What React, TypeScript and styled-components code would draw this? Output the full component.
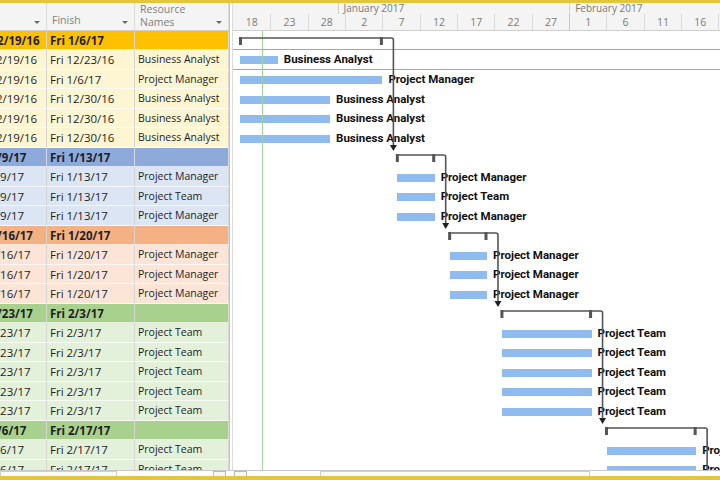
import React from "react";
import styled, { createGlobalStyle } from "styled-components";

const DAY = 7.47;
const ROW = 19.5;

const GlobalStyle = createGlobalStyle`
  html, body {
    margin: 0;
    padding: 0;
    background: #ffffff;
  }
  body {
    font-family: "Open Sans", "Noto Sans", sans-serif;
  }
`;

const groups = [
  { head: "#ffc000", body: "#fef6d3" },
  { head: "#8eaadb", body: "#dce5f4" },
  { head: "#f4b183", body: "#fce5d6" },
  { head: "#a9d18e", body: "#e3f0da" },
  { head: "#a9d18e", body: "#e3f0da" },
];

type Task = {
  start: string;
  finish: string;
  res: string;
  group: number;
  from: number;
  to: number;
  summary?: boolean;
};

const BA = "Business Analyst";
const PM = "Project Manager";
const PT = "Project Team";

// days counted from Sun 12/18/16
const tasks: Task[] = [
  { start: "Mon 12/19/16", finish: "Fri 1/6/17", res: "", group: 0, from: 1, to: 20, summary: true },
  { start: "Mon 12/19/16", finish: "Fri 12/23/16", res: BA, group: 0, from: 1, to: 6 },
  { start: "Mon 12/19/16", finish: "Fri 1/6/17", res: PM, group: 0, from: 1, to: 20 },
  { start: "Mon 12/19/16", finish: "Fri 12/30/16", res: BA, group: 0, from: 1, to: 13 },
  { start: "Mon 12/19/16", finish: "Fri 12/30/16", res: BA, group: 0, from: 1, to: 13 },
  { start: "Mon 12/19/16", finish: "Fri 12/30/16", res: BA, group: 0, from: 1, to: 13 },
  { start: "Mon 1/9/17", finish: "Fri 1/13/17", res: "", group: 1, from: 22, to: 27, summary: true },
  { start: "Mon 1/9/17", finish: "Fri 1/13/17", res: PM, group: 1, from: 22, to: 27 },
  { start: "Mon 1/9/17", finish: "Fri 1/13/17", res: PT, group: 1, from: 22, to: 27 },
  { start: "Mon 1/9/17", finish: "Fri 1/13/17", res: PM, group: 1, from: 22, to: 27 },
  { start: "Mon 1/16/17", finish: "Fri 1/20/17", res: "", group: 2, from: 29, to: 34, summary: true },
  { start: "Mon 1/16/17", finish: "Fri 1/20/17", res: PM, group: 2, from: 29, to: 34 },
  { start: "Mon 1/16/17", finish: "Fri 1/20/17", res: PM, group: 2, from: 29, to: 34 },
  { start: "Mon 1/16/17", finish: "Fri 1/20/17", res: PM, group: 2, from: 29, to: 34 },
  { start: "Mon 1/23/17", finish: "Fri 2/3/17", res: "", group: 3, from: 36, to: 48, summary: true },
  { start: "Mon 1/23/17", finish: "Fri 2/3/17", res: PT, group: 3, from: 36, to: 48 },
  { start: "Mon 1/23/17", finish: "Fri 2/3/17", res: PT, group: 3, from: 36, to: 48 },
  { start: "Mon 1/23/17", finish: "Fri 2/3/17", res: PT, group: 3, from: 36, to: 48 },
  { start: "Mon 1/23/17", finish: "Fri 2/3/17", res: PT, group: 3, from: 36, to: 48 },
  { start: "Mon 1/23/17", finish: "Fri 2/3/17", res: PT, group: 3, from: 36, to: 48 },
  { start: "Mon 2/6/17", finish: "Fri 2/17/17", res: "", group: 4, from: 50, to: 62, summary: true },
  { start: "Mon 2/6/17", finish: "Fri 2/17/17", res: PT, group: 4, from: 50, to: 62 },
  { start: "Mon 2/6/17", finish: "Fri 2/17/17", res: PT, group: 4, from: 50, to: 62 },
];

const months = [
  { label: "", days: 14 },
  { label: "January 2017", days: 31 },
  { label: "February 2017", days: 28 },
];

const dayLabels = ["18", "23", "28", "2", "7", "12", "17", "22", "27", "1", "6", "11", "16", "21"];

const Frame = styled.div`
  width: 720px;
  height: 480px;
  display: flex;
  flex-direction: column;
  overflow: hidden;
  border-top: 3px solid #e3c63c;
  border-bottom: 4px solid #e3c63c;
  box-sizing: border-box;
`;

const Main = styled.div`
  flex: 1;
  display: flex;
  overflow: hidden;
`;

/* ---------- table ---------- */

const TablePane = styled.div`
  width: 229px;
  flex-shrink: 0;
  display: flex;
  flex-direction: column;
  overflow: hidden;
`;

const HeadRow = styled.div`
  display: flex;
  height: 27.5px;
  flex-shrink: 0;
  background: #f4f4f4;
  border-bottom: 1px solid #cfcfcf;
  box-sizing: border-box;
`;

const HeadCell = styled.div<{ $w: number; $shift?: number }>`
  width: ${(p) => p.$w}px;
  flex-shrink: 0;
  margin-left: ${(p) => p.$shift ?? 0}px;
  display: flex;
  align-items: flex-end;
  justify-content: space-between;
  padding: 0 6px 1px 5px;
  box-sizing: border-box;
  border-right: 1px solid #dadada;
  color: #808080;
  font-size: 10.5px;
  line-height: 13px;
`;

const DropArrow = styled.span`
  width: 0;
  height: 0;
  margin-bottom: 5px;
  border-left: 3.5px solid transparent;
  border-right: 3.5px solid transparent;
  border-top: 3.5px solid #6a6a6a;
`;

const TableRow = styled.div<{ $bg: string; $bold?: boolean }>`
  display: flex;
  height: ${ROW}px;
  flex-shrink: 0;
  background: ${(p) => p.$bg};
  font-weight: ${(p) => (p.$bold ? 700 : 400)};
  color: #1e1e1e;
`;

const Cell = styled.div<{ $w: number; $shift?: number; $small?: boolean }>`
  width: ${(p) => p.$w}px;
  flex-shrink: 0;
  margin-left: ${(p) => p.$shift ?? 0}px;
  padding: ${(p) => (p.$small ? "1px 0 0 3px" : "2px 0 0 3px")};
  box-sizing: border-box;
  border-right: 1px solid #d6d6d6;
  border-bottom: 1px solid rgba(255, 255, 255, 0.7);
  font-size: ${(p) => (p.$small ? "10.5px" : "11.5px")};
  line-height: 16px;
  white-space: nowrap;
  overflow: hidden;
`;

const Splitter = styled.div`
  width: 4px;
  flex-shrink: 0;
  background: #ffffff;
  border-left: 1px solid #c4c4c4;
  border-right: 1px solid #dcdcdc;
  box-sizing: border-box;
`;

/* ---------- gantt ---------- */

const GanttPane = styled.div`
  flex: 1;
  display: flex;
  flex-direction: column;
  overflow: hidden;
`;

const Scale = styled.div`
  height: 27.5px;
  flex-shrink: 0;
  display: flex;
  flex-direction: column;
  background: #f4f4f4;
  border-bottom: 1px solid #cfcfcf;
  box-sizing: border-box;
  color: #7a7a7a;
`;

const Tier = styled.div<{ $h: number }>`
  display: flex;
  height: ${(p) => p.$h}px;
  flex-shrink: 0;
`;

const MonthCell = styled.div<{ $first?: boolean }>`
  flex-shrink: 0;
  padding-left: 5px;
  box-sizing: border-box;
  border-left: ${(p) => (p.$first ? "none" : "1px solid #d2d2d2")};
  font-size: 10px;
  line-height: 10px;
  white-space: nowrap;
`;

const DayCell = styled.div<{ $first?: boolean; $month?: boolean }>`
  flex-shrink: 0;
  display: flex;
  align-items: center;
  justify-content: center;
  border-left: ${(p) => (p.$first ? "none" : `1px solid ${p.$month ? "#c8c8c8" : "#dcdcdc"}`)};
  box-sizing: border-box;
  font-size: 10.5px;
`;

const Chart = styled.div`
  position: relative;
  flex: 1;
  display: flex;
  flex-direction: column;
  overflow: hidden;
`;

const ChartRow = styled.div<{ $line?: boolean }>`
  height: ${ROW}px;
  flex-shrink: 0;
  display: flex;
  align-items: center;
  box-sizing: border-box;
  border-bottom: ${(p) => (p.$line ? "1px solid #a6a6a6" : "none")};
`;

const Bar = styled.div`
  height: 8px;
  margin-top: 2px;
  flex-shrink: 0;
  background: #90bbef;
`;

const BarLabel = styled.span`
  margin-left: 6px;
  font-family: Roboto, "Liberation Sans", sans-serif;
  font-weight: 700;
  font-size: 11.5px;
  color: #111111;
  white-space: nowrap;
`;

const Links = styled.svg`
  position: absolute;
  left: 0;
  top: 0;
  pointer-events: none;
`;

/* ---------- bottom scrollbars ---------- */

const ScrollStrip = styled.div`
  height: 6px;
  flex-shrink: 0;
  display: flex;
  background: #ffffff;
  border-top: 1px solid #c8c8c8;
  box-sizing: border-box;
`;

const ScrollPart = styled.div<{ $w?: number }>`
  width: ${(p) => (p.$w ? `${p.$w}px` : "auto")};
  flex: ${(p) => (p.$w ? "0 0 auto" : "1")};
  display: flex;
  align-items: stretch;
`;

const Thumb = styled.div<{ $w: number; $left: number }>`
  width: ${(p) => p.$w}px;
  margin-left: ${(p) => p.$left}px;
  border: 1px solid #cfcfcf;
  border-bottom: none;
  background: #fafafa;
  box-sizing: border-box;
`;

const ArrowBtn = styled.div<{ $left: number }>`
  width: 13px;
  margin-left: ${(p) => p.$left}px;
  border: 1px solid #b8b8b8;
  border-bottom: none;
  background: #f7f7f7;
  box-sizing: border-box;
`;

const GanttLinks = () => {
  const sums = tasks.map((t, i) => ({ t, i })).filter((s) => s.t.summary);
  const height = 480;
  return (
    <Links width={487} height={height}>
      <line x1={29.5} y1={0} x2={29.5} y2={height} stroke="#9fd49a" strokeWidth={1} />
      {sums.map((s, k) => {
        const top = s.i * ROW;
        const x1 = s.t.from * DAY;
        const x2 = s.t.to * DAY;
        const cx = x2 + 11;
        const next = sums[k + 1];
        const endY = next ? next.i * ROW - 1 : height;
        return (
          <g key={s.i}>
            <path
              d={`M ${x1 - 1} ${top + 7} H ${cx - 2} Q ${cx} ${top + 7} ${cx} ${top + 9} V ${endY}`}
              fill="none"
              stroke="#555555"
              strokeWidth={1.6}
            />
            <rect x={x1 - 1.5} y={top + 6} width={3} height={8} fill="#555555" />
            <rect x={x2 - 2.5} y={top + 6} width={3} height={8} fill="#555555" />
            {next && (
              <polygon
                points={`${cx - 3.5},${endY - 2} ${cx + 3.5},${endY - 2} ${cx},${endY + 4}`}
                fill="#222222"
              />
            )}
          </g>
        );
      })}
    </Links>
  );
};

const App = () => {
  return (
    <>
      <GlobalStyle />
      <Frame>
        <Main>
          <TablePane>
            <HeadRow>
              <HeadCell $w={88} $shift={-41}>
                <span>Start</span>
                <DropArrow />
              </HeadCell>
              <HeadCell $w={88}>
                <span style={{ marginBottom: 2 }}>Finish</span>
                <DropArrow />
              </HeadCell>
              <HeadCell $w={94}>
                <span>
                  Resource
                  <br />
                  Names
                </span>
                <DropArrow />
              </HeadCell>
            </HeadRow>
            {tasks.map((t, i) => {
              const g = groups[t.group];
              return (
                <TableRow key={i} $bg={t.summary ? g.head : g.body} $bold={t.summary}>
                  <Cell $w={88} $shift={-41}>{t.start}</Cell>
                  <Cell $w={88}>{t.finish}</Cell>
                  <Cell $w={94} $small>{t.res}</Cell>
                </TableRow>
              );
            })}
          </TablePane>
          <Splitter />
          <GanttPane>
            <Scale>
              <Tier $h={10.5}>
                {months.map((m, i) => (
                  <MonthCell key={i} $first={i === 0} style={{ width: m.days * DAY }}>
                    {m.label}
                  </MonthCell>
                ))}
              </Tier>
              <Tier $h={16}>
                {dayLabels.map((d, i) => (
                  <DayCell key={i} $first={i === 0} $month={d === "1"} style={{ width: 5 * DAY }}>
                    {d}
                  </DayCell>
                ))}
              </Tier>
            </Scale>
            <Chart>
              {tasks.map((t, i) => (
                <ChartRow key={i} $line={i < 2}>
                  {!t.summary && (
                    <>
                      <Bar style={{ marginLeft: t.from * DAY, width: (t.to - t.from) * DAY }} />
                      <BarLabel>{t.res}</BarLabel>
                    </>
                  )}
                </ChartRow>
              ))}
              <GanttLinks />
            </Chart>
          </GanttPane>
        </Main>
        <ScrollStrip>
          <ScrollPart $w={233}>
            <Thumb $w={117} $left={0} />
            <ArrowBtn $left={96} />
          </ScrollPart>
          <ScrollPart>
            <ArrowBtn $left={1} />
            <Thumb $w={270} $left={73} />
          </ScrollPart>
        </ScrollStrip>
      </Frame>
    </>
  );
};

export default App;
